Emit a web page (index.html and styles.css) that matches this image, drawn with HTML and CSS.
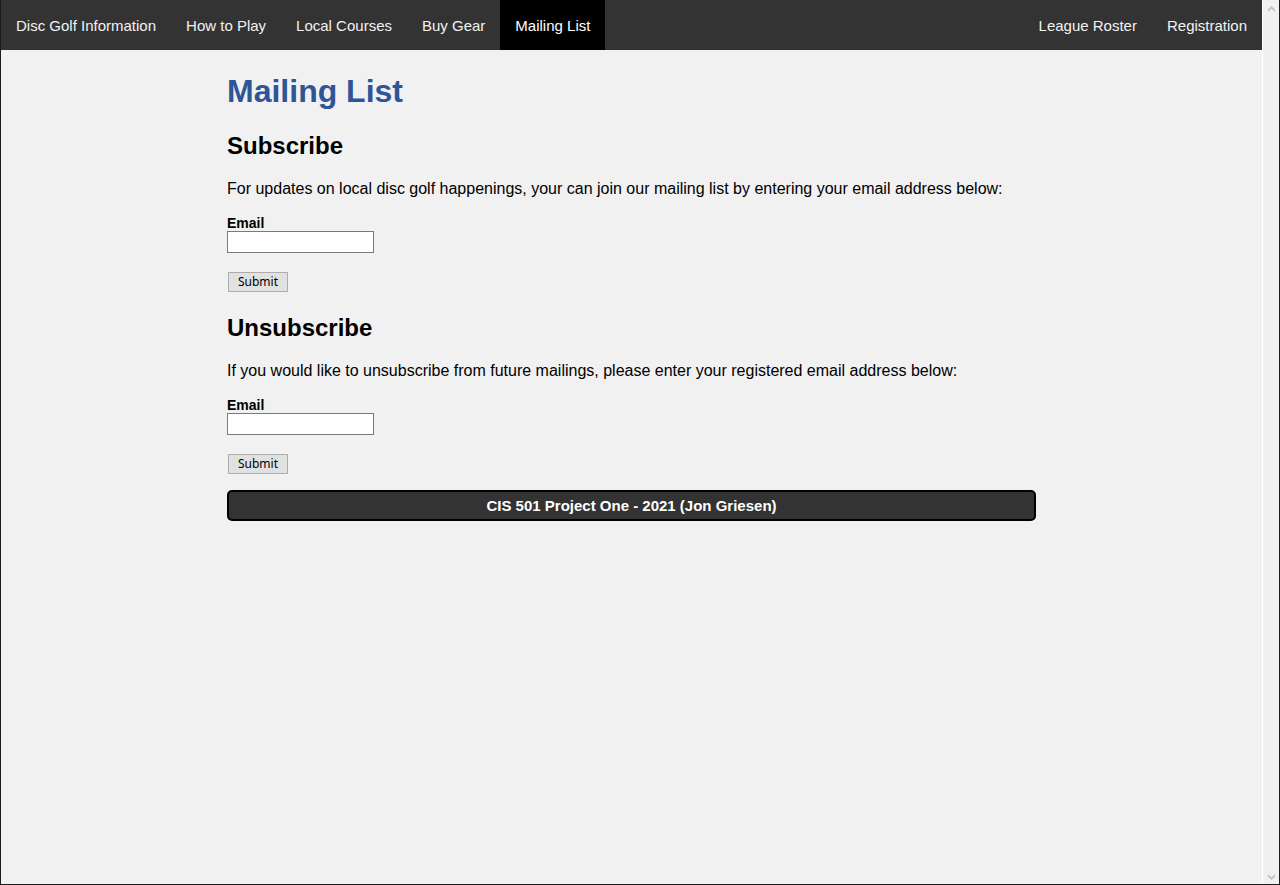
FILE: index.html
```html
<!DOCTYPE html>
<html lang="en">
<head>
<meta charset="utf-8">
<title>Mailing List</title>
<link rel="stylesheet" href="styles.css">
</head>
<body>
<div class="window">
  <div class="page">
    <nav class="nav">
      <a class="nav-link" href="#">Disc Golf Information</a>
      <a class="nav-link" href="#">How to Play</a>
      <a class="nav-link" href="#">Local Courses</a>
      <a class="nav-link" href="#">Buy Gear</a>
      <a class="nav-link active" href="#" aria-current="page">Mailing List</a>
      <a class="nav-link push-right" href="#">League Roster</a>
      <a class="nav-link" href="#">Registration</a>
    </nav>
    <main class="content">
      <h1 class="title">Mailing List</h1>
      <h2 class="heading">Subscribe</h2>
      <p class="text">For updates on local disc golf happenings, your can join our mailing list by entering your email address below:</p>
      <form class="form">
        <label class="label" for="subscribe-email">Email</label>
        <input class="field" id="subscribe-email" type="email">
        <button class="submit" type="button">Submit</button>
      </form>
      <h2 class="heading">Unsubscribe</h2>
      <p class="text">If you would like to unsubscribe from future mailings, please enter your registered email address below:</p>
      <form class="form">
        <label class="label" for="unsubscribe-email">Email</label>
        <input class="field" id="unsubscribe-email" type="email">
        <button class="submit" type="button">Submit</button>
      </form>
      <footer class="footer">CIS 501 Project One - 2021 (Jon Griesen)</footer>
    </main>
  </div>
  <div class="scrollbar" aria-hidden="true">
    <svg class="arrow" width="7" height="6" viewBox="0 0 7 6"><path d="M0 3.5 3.5 0 7 3.5V6L3.5 2.5 0 6Z"/></svg>
    <svg class="arrow" width="7" height="6" viewBox="0 0 7 6"><path d="M0 0 3.5 3.5 7 0V2.5L3.5 6 0 2.5Z"/></svg>
  </div>
</div>
</body>
</html>
```
FILE: styles.css
```css
* {
  box-sizing: border-box;
}

body {
  margin: 0;
  background: #f1f1f1;
  color: #000;
  font-family: "Liberation Sans", Arial, sans-serif;
  font-size: 16px;
}

.window {
  display: flex;
  min-height: 100vh;
  border: solid #1c1c1e;
  border-width: 0 1px 1px;
}

.page {
  flex: 1;
}

.nav {
  display: flex;
  background: #333;
}

.nav-link {
  padding: 17px 15px 15px;
  color: #f2f2f2;
  font-size: 15px;
  line-height: 18px;
  text-decoration: none;
  white-space: nowrap;
}

.nav-link.active {
  background: #000;
  color: #fff;
}

.push-right {
  margin-left: auto;
}

.content {
  max-width: 809px;
  margin: 0 auto;
  padding-top: 22px;
}

.title {
  margin: 0 0 22px;
  color: #2f5597;
  font-size: 32px;
  line-height: 38px;
}

.heading {
  margin: 0 0 20px;
  font-size: 24px;
  line-height: 28px;
}

.text {
  margin: 0 0 18px;
  line-height: 18px;
}

.form {
  display: flex;
  flex-direction: column;
  align-items: flex-start;
  margin-bottom: 22px;
}

.label {
  font-size: 14px;
  font-weight: bold;
  line-height: 15px;
}

.field {
  width: 147px;
  height: 22px;
  margin: 0 0 19px;
  padding: 1px 2px;
  border: 1px solid #7a7a7a;
  background: #fff;
}

.submit {
  width: 60px;
  height: 20px;
  margin-left: 1px;
  padding: 0;
  border: 1px solid #adadad;
  background: #e1e1e1;
  color: #000;
  font-family: "Noto Sans", sans-serif;
  font-size: 12px;
  line-height: 18px;
}

.footer {
  margin-top: -6px;
  padding: 5px;
  border: 2px solid #000;
  border-radius: 5px;
  background: #333;
  color: #fff;
  font-size: 15px;
  font-weight: bold;
  line-height: 17px;
  text-align: center;
}

.scrollbar {
  display: flex;
  flex-direction: column;
  align-items: center;
  justify-content: space-between;
  width: 17px;
  padding: 6px 0 4px;
  border-left: 1px solid #fff;
  background: #f0f0f0;
}

.arrow {
  fill: #bfbfbf;
}
```
